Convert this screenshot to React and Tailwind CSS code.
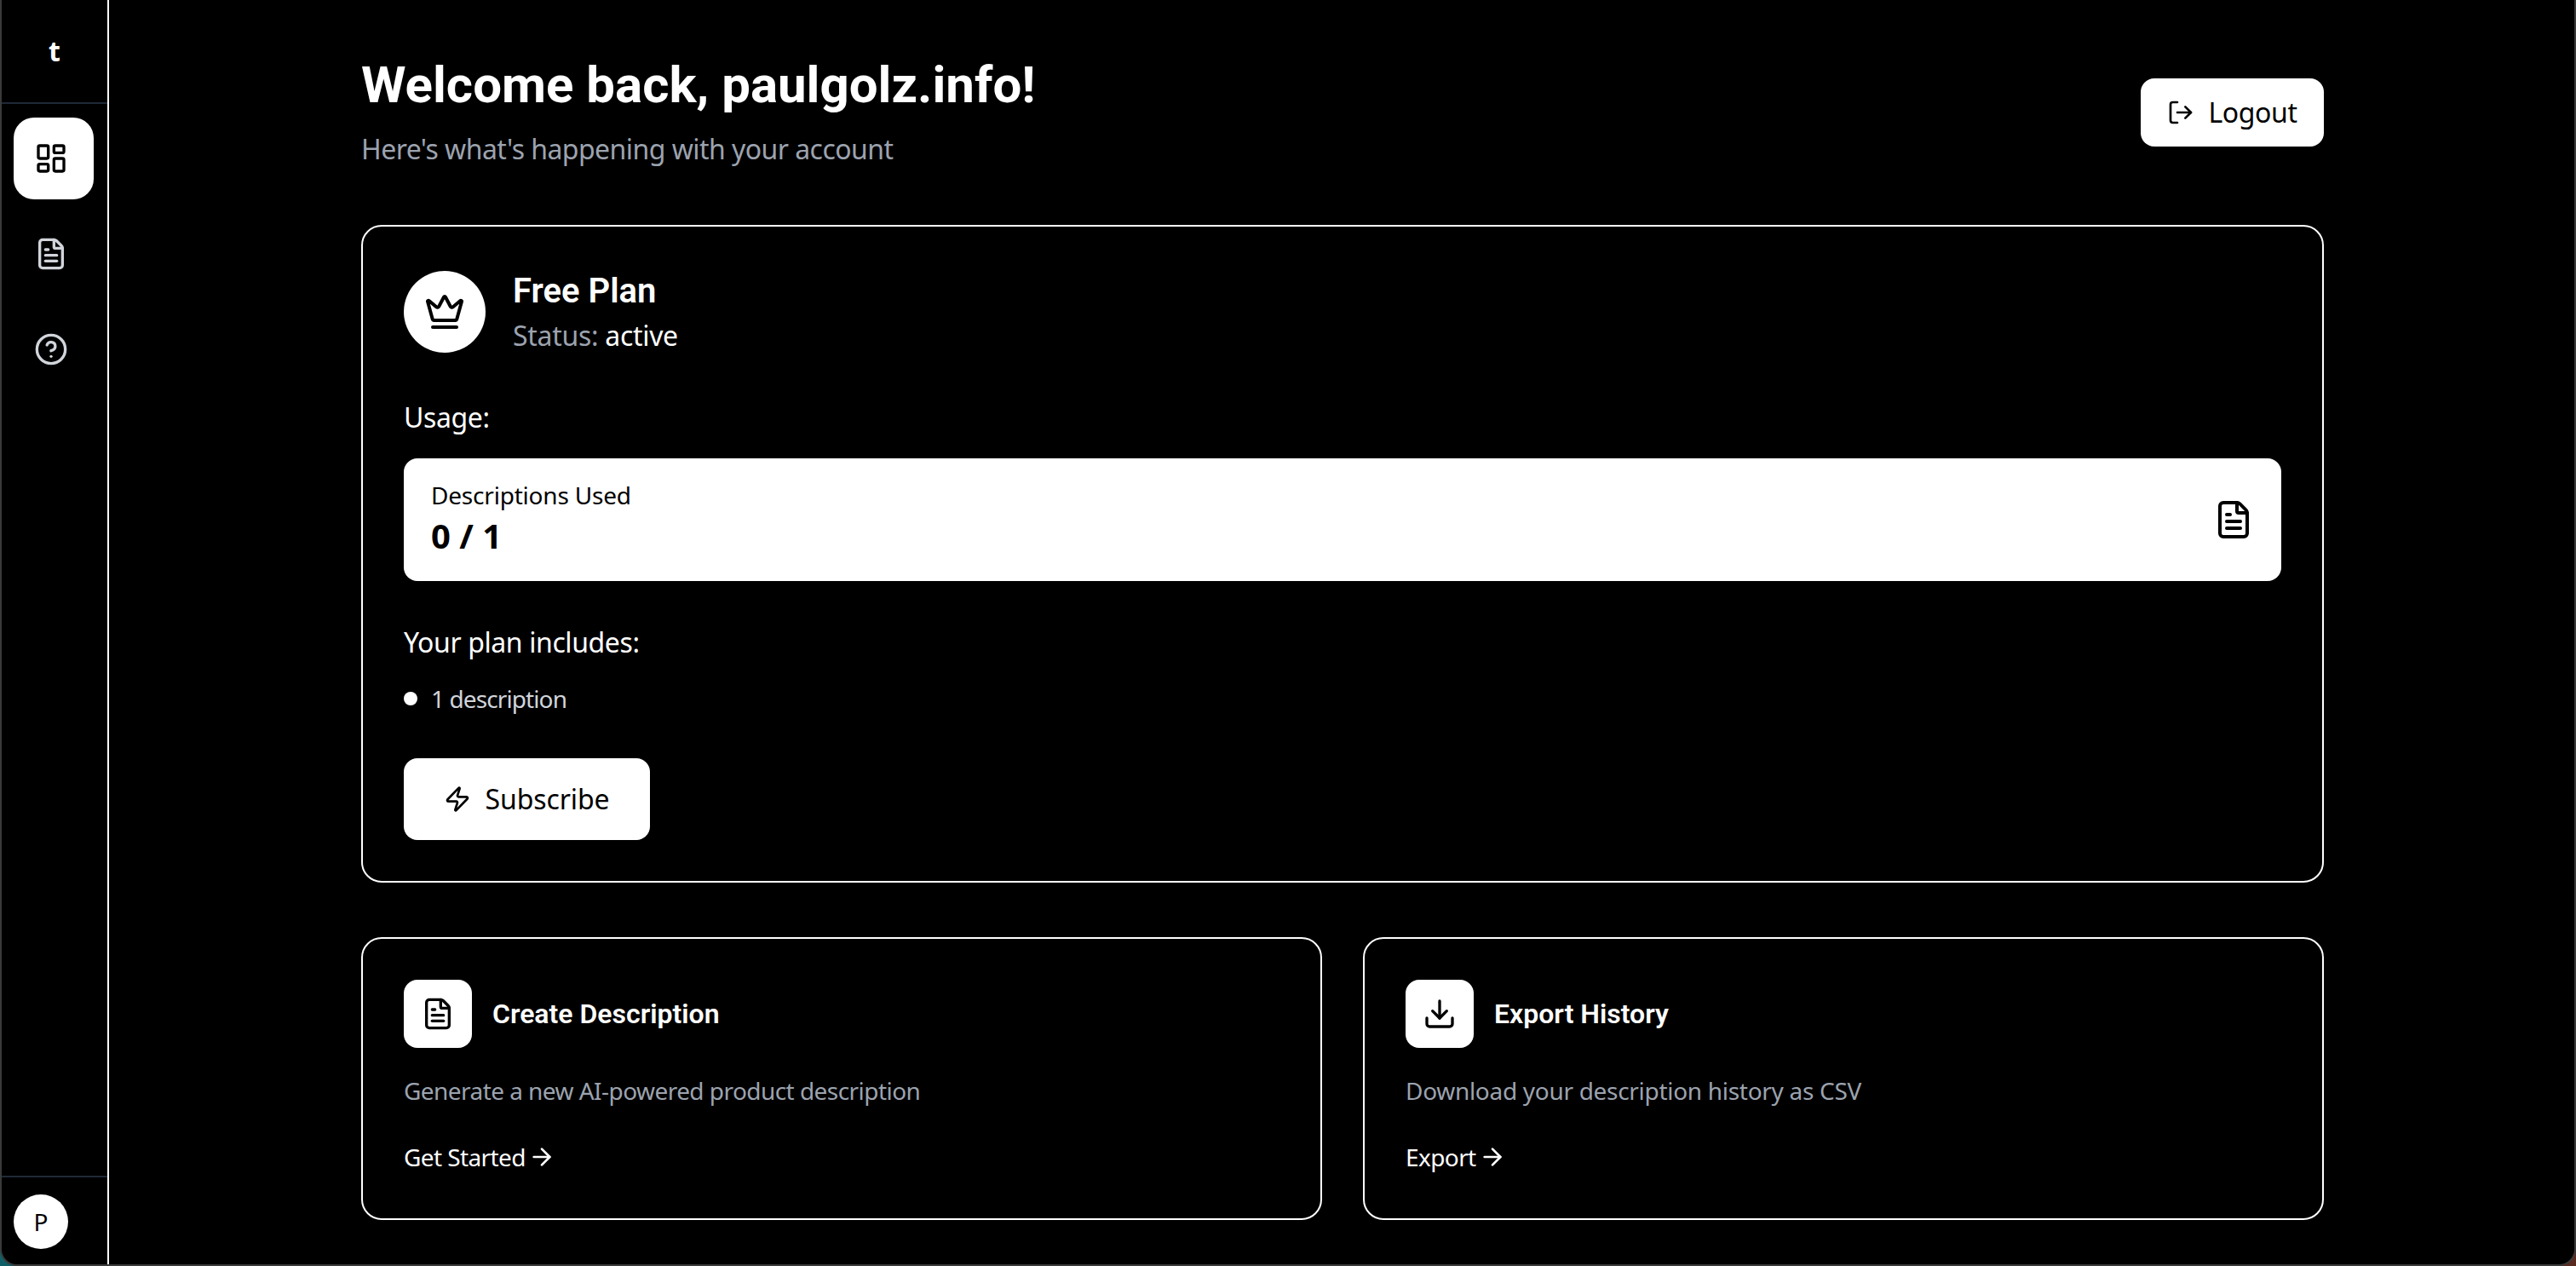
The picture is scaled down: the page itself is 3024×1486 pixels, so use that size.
import React from "react";
import { LayoutDashboard, FileText, CircleHelp, LogOut, Crown, Zap, Download, ArrowRight } from "lucide-react";

function ActionCard({ icon, title, desc, cta, track }) {
  return (
    <div className="flex-1 h-[332px] rounded-[24px] border-2 border-white px-[48px] pt-[48px]">
      <div className="flex items-center gap-[24px]">
        <div className="w-[80px] h-[80px] rounded-[16px] bg-white flex items-center justify-center text-black">{icon}</div>
        <div className="text-[32px] leading-[48px] font-semibold text-white font-['Roboto',sans-serif]">{title}</div>
      </div>
      <p className={`mt-[30px] text-[28px] leading-[40px] text-[#9ca3af] ${track}`}>{desc}</p>
      <div className="mt-[38px] flex items-center gap-[3px] text-[28px] leading-[40px] text-white tracking-[-0.6px]">
        {cta}
        <ArrowRight size={32} strokeWidth={2} />
      </div>
    </div>
  );
}

export default function App() {
  return (
    <div className="w-[3024px] h-[1486px] overflow-hidden bg-gradient-to-r from-[#0f5f68] to-[#5a2a20]">
      <div className="w-full h-full rounded-b-[20px] border-x-2 border-b-2 border-[#3a3a3a] bg-black flex overflow-hidden font-['Noto_Sans',sans-serif] text-white">
        <aside className="w-[126px] shrink-0 border-r-2 border-white flex flex-col">
          <div className="h-[122px] shrink-0 border-b-2 border-[#1f2937] flex items-center justify-center text-[32px] font-bold leading-none">t</div>
          <nav className="flex-1 pl-[14px] pr-[16px] pt-[16px] flex flex-col gap-[16px]">
            <div className="h-[96px] rounded-[24px] bg-white text-black flex items-center justify-center pr-[6px]">
              <LayoutDashboard size={40} strokeWidth={2} />
            </div>
            <div className="h-[96px] flex items-center justify-center text-[#d1d5db] pr-[6px]"><FileText size={40} strokeWidth={2} /></div>
            <div className="h-[96px] flex items-center justify-center text-[#d1d5db] pr-[6px]"><CircleHelp size={40} strokeWidth={2} /></div>
          </nav>
          <div className="h-[104px] shrink-0 border-t-2 border-[#1f2937] pl-[14px] pt-[20px]">
            <div className="w-[64px] h-[64px] rounded-full bg-white text-black flex items-center justify-center text-[28px]">P</div>
          </div>
        </aside>
        <main className="flex-1 flex justify-center pl-[2px]">
          <div className="w-[2304px]">
            <header className="flex items-center justify-between pt-[60px]">
              <div className="pb-[5px]">
                <h1 className="text-[60px] leading-[80px] font-bold font-['Roboto',sans-serif]">Welcome back, paulgolz.info!</h1>
                <p className="text-[32px] leading-[48px] text-[#9ca3af] mt-[11px] tracking-[-0.55px]">Here's what's happening with your account</p>
              </div>
              <button className="h-[80px] w-[215px] rounded-[16px] bg-white text-black flex items-center justify-center gap-[16px] text-[32px] tracking-[-0.4px]">
                <LogOut size={32} strokeWidth={2} />
                Logout
              </button>
            </header>
            <section className="mt-[60px] h-[772px] rounded-[24px] border-2 border-white px-[48px] pt-[48px]">
              <div className="flex items-center gap-[32px]">
                <div className="w-[96px] h-[96px] rounded-full bg-white text-black flex items-center justify-center"><Crown size={48} strokeWidth={2} /></div>
                <div>
                  <div className="text-[40px] leading-[56px] font-semibold font-['Roboto',sans-serif]">Free Plan</div>
                  <div className="text-[32px] leading-[48px] text-[#9ca3af] tracking-[-0.3px]">Status: <span className="text-white">active</span></div>
                </div>
              </div>
              <div className="mt-[48px] text-[32px] leading-[48px] tracking-[-0.4px]">Usage:</div>
              <div className="mt-[24px] h-[144px] rounded-[16px] bg-white text-black flex items-center justify-between px-[32px]">
                <div className="pb-[3px]">
                  <div className="text-[28px] leading-[40px] tracking-[-0.2px]">Descriptions Used</div>
                  <div className="text-[40px] leading-[56px] font-bold">0 / 1</div>
                </div>
                <FileText size={48} strokeWidth={2} />
              </div>
              <div className="mt-[48px] text-[32px] leading-[48px] tracking-[-0.4px]">Your plan includes:</div>
              <div className="mt-[22px] flex items-center gap-[16px] text-[28px] leading-[40px] text-[#d1d5db] tracking-[-0.9px]">
                <span className="w-[16px] h-[16px] rounded-full bg-white" />1 description
              </div>
              <button className="mt-[50px] h-[96px] w-[289px] rounded-[16px] bg-white text-black flex items-center justify-center gap-[16px] text-[32px] tracking-[-0.1px]">
                <Zap size={32} strokeWidth={2} />Subscribe
              </button>
            </section>
            <div className="mt-[64px] flex gap-[48px]">
              <ActionCard icon={<FileText size={40} strokeWidth={2} />} title="Create Description" desc="Generate a new AI-powered product description" cta="Get Started" track="tracking-[-0.55px]" />
              <ActionCard icon={<Download size={40} strokeWidth={2} />} title="Export History" desc="Download your description history as CSV" cta="Export" track="tracking-[-0.3px]" />
            </div>
          </div>
        </main>
      </div>
    </div>
  );
}
